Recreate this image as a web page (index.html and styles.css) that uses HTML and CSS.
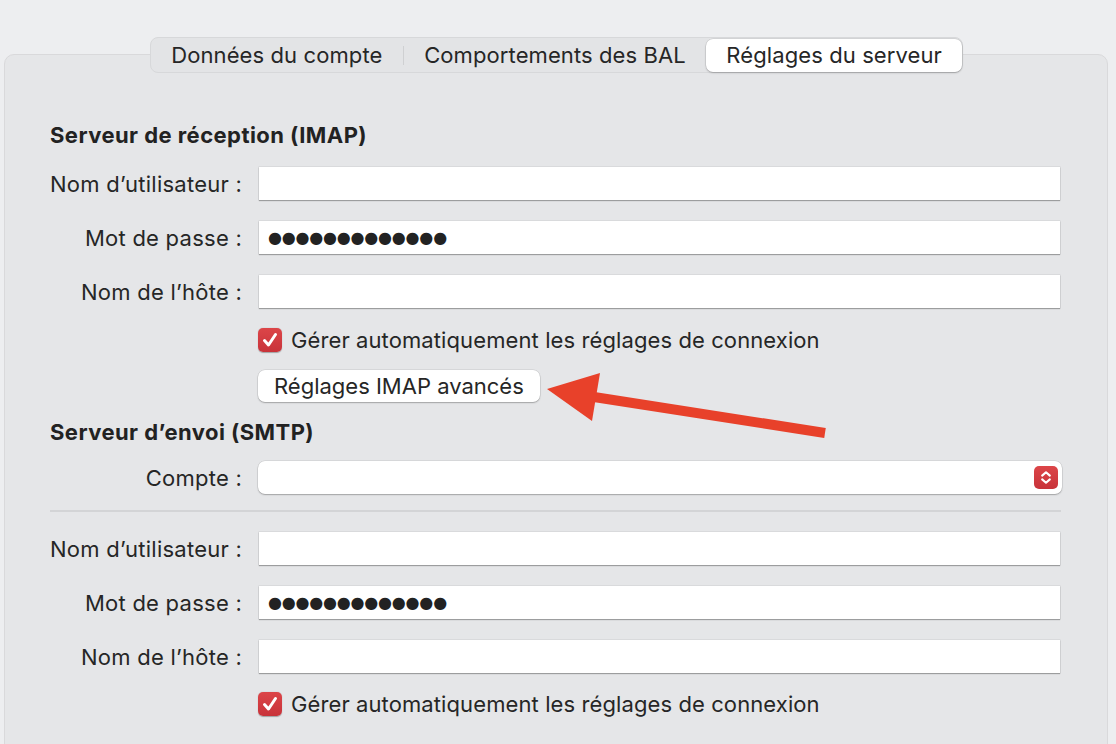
FILE: index.html
```html
<!DOCTYPE html>
<html lang="fr">
<head>
<meta charset="utf-8">
<title>Réglages du serveur</title>
<link rel="stylesheet" href="styles.css">
</head>
<body>
<div class="window">
  <div class="tabs">
    <div class="tab t1">Données du compte</div>
    <div class="sep"></div>
    <div class="tab t2">Comportements des BAL</div>
    <div class="tab t3 active">Réglages du serveur</div>
  </div>
  <div class="panel">
    <h2 class="heading">Serveur de réception (IMAP)</h2>
    <div class="form">
      <label class="label">Nom d’utilisateur :</label>
      <div class="field"></div>
      <label class="label">Mot de passe :</label>
      <div class="field pw">●●●●●●●●●●●●●</div>
      <label class="label">Nom de l’hôte :</label>
      <div class="field"></div>
    </div>
    <div class="check-row">
      <span class="checkbox"><svg viewBox="0 0 24 24" width="24" height="24"><path d="M6.5 12.5 L10.5 17 L17.5 6.5" fill="none" stroke="#fff" stroke-width="3" stroke-linecap="round" stroke-linejoin="round"/></svg></span>
      <span class="check-text">Gérer automatiquement les réglages de connexion</span>
    </div>
    <div class="button-row">
      <div class="button">Réglages IMAP avancés</div>
    </div>
    <h2 class="heading h2">Serveur d’envoi (SMTP)</h2>
    <div class="form compte">
      <label class="label">Compte :</label>
      <div class="select">
        <span class="stepper"><svg viewBox="0 0 24 24" width="24" height="23"><path d="M8 10 L12 6.5 L16 10 M8 14 L12 17.5 L16 14" fill="none" stroke="#fff" stroke-width="2.2" stroke-linecap="round" stroke-linejoin="round"/></svg></span>
      </div>
    </div>
    <div class="divider"></div>
    <div class="form">
      <label class="label">Nom d’utilisateur :</label>
      <div class="field"></div>
      <label class="label">Mot de passe :</label>
      <div class="field pw">●●●●●●●●●●●●●</div>
      <label class="label">Nom de l’hôte :</label>
      <div class="field"></div>
    </div>
    <div class="check-row last">
      <span class="checkbox"><svg viewBox="0 0 24 24" width="24" height="24"><path d="M6.5 12.5 L10.5 17 L17.5 6.5" fill="none" stroke="#fff" stroke-width="3" stroke-linecap="round" stroke-linejoin="round"/></svg></span>
      <span class="check-text">Gérer automatiquement les réglages de connexion</span>
    </div>
  </div>
</div>
<svg class="arrow" width="1116" height="744" viewBox="0 0 1116 744">
  <line x1="594" y1="397" x2="825" y2="433" stroke="#e8412a" stroke-width="10"/>
  <polygon points="547,389 600,373 592,421" fill="#e8412a"/>
</svg>
</body>
</html>
```

FILE: styles.css
```css
* { box-sizing: border-box; }
html, body { margin: 0; padding: 0; }
body {
  background: #edeef0;
  font-family: Inter, "Noto Sans", "Liberation Sans", sans-serif;
  color: #262626;
  font-size: 22px;
  letter-spacing: 0.1px;
  width: 1116px;
  height: 744px;
  overflow: hidden;
  position: relative;
}
.window {
  padding-top: 37px;
}
.tabs {
  position: relative;
  z-index: 2;
  display: flex;
  align-items: center;
  width: 813px;
  height: 36px;
  margin-left: 150px;
  background: #e3e4e6;
  border: 1px solid #d7d8da;
  border-radius: 8px;
}
.tab {
  height: 100%;
  display: flex;
  align-items: center;
  justify-content: center;
  white-space: nowrap;
  color: #262626;
}
.t1 { width: 252px; }
.t2 { width: 303px; }
.t3 { width: 256px; }
.sep {
  width: 1px;
  height: 19px;
  background: #cfd0d2;
}
.tab.active {
  background: #ffffff;
  border-radius: 7px;
  height: 33px;
  box-shadow: 0 0 0 0.5px rgba(0,0,0,0.12), 0 1px 2px rgba(0,0,0,0.22);
}
.panel {
  margin: -19px 8px 0 4px;
  height: 720px;
  background: #e5e6e8;
  border: 1px solid #d9d9db;
  border-radius: 10px;
  padding: 68px 47px 0 45px;
}
.heading {
  margin: 0;
  font-size: 22px;
  font-weight: 700;
  letter-spacing: 0.45px;
  line-height: 24px;
  color: #222;
}
.form {
  display: grid;
  grid-template-columns: 192px 1fr;
  column-gap: 17px;
  row-gap: 21px;
  margin-top: 20px;
  align-items: center;
}
.label {
  text-align: right;
  white-space: nowrap;
  letter-spacing: 0.25px;
}
.field {
  height: 33px;
  background: #fff;
  box-shadow: 0 0 0 0.5px rgba(0,0,0,0.1), 0 1px 1px rgba(0,0,0,0.28);
  display: flex;
  align-items: center;
  padding-left: 9px;
}
.pw {
  font-size: 16px;
  letter-spacing: -0.2px;
  color: #222;
  font-family: "DejaVu Sans", sans-serif;
}
.check-row {
  display: flex;
  align-items: center;
  margin-top: 20px;
  margin-left: 208px;
  height: 24px;
}
.check-row.last { margin-top: 19px; }
.checkbox {
  width: 24px;
  height: 24px;
  border-radius: 5px;
  background: linear-gradient(#dc4548, #c8333a);
  box-shadow: 0 0.5px 1px rgba(0,0,0,0.3);
  display: flex;
}
.check-text {
  margin-left: 9px;
  white-space: nowrap;
}
.button-row {
  margin-top: 18px;
  margin-left: 208px;
}
.button {
  display: inline-flex;
  align-items: center;
  height: 32px;
  width: 282px;
  padding-left: 16px;
  background: #fff;
  border-radius: 7px;
  box-shadow: 0 0 0 0.5px rgba(0,0,0,0.12), 0 1px 1.5px rgba(0,0,0,0.25);
  white-space: nowrap;
  letter-spacing: 0;
}
.h2 { margin-top: 18px; }
.compte { margin-top: 17px; }
.select {
  height: 33px;
  margin-left: -1px;
  margin-right: -2px;
  background: #fff;
  border-radius: 7px;
  box-shadow: 0 0 0 0.5px rgba(0,0,0,0.12), 0 1px 1.5px rgba(0,0,0,0.25);
  display: flex;
  align-items: center;
  justify-content: flex-end;
  padding-right: 4px;
}
.stepper {
  width: 24px;
  height: 23px;
  border-radius: 5px;
  background: linear-gradient(#dc4548, #c8333a);
  display: flex;
}
.divider {
  height: 2px;
  background: #d3d4d6;
  margin-top: 16px;
  margin-right: -1px;
}
.divider + .form { margin-top: 20px; }
.arrow {
  position: absolute;
  left: 0;
  top: 0;
  pointer-events: none;
  z-index: 5;
}
```
